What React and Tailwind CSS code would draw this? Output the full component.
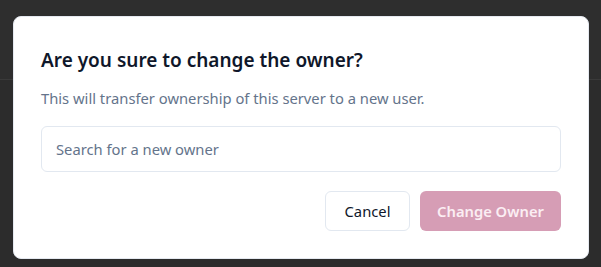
export default function App() {
    return (
        <div className="relative h-[267px] w-[601px] overflow-hidden bg-[#2c2c2c] font-['Noto_Sans',sans-serif]">
            {/* page behind the overlay */}
            <div className="h-[80px] border-b border-[#3a3a3a] bg-[#2e2e2e]" />

            <div className="absolute left-[13px] top-[16px] w-[576px] rounded-lg border border-[#e5e9f0] bg-white px-[27px] pb-[27px] pt-[29px]">
                <h2 className="text-[19px] font-semibold leading-7 text-[#0f172a]">
                    Are you sure to change the owner?
                </h2>

                <p className="mt-[14px] text-[14.75px] leading-5 text-[#64748b]">
                    This will transfer ownership of this server to a new user.
                </p>

                <input
                    type="text"
                    placeholder="Search for a new owner"
                    className="mt-[18px] h-[46px] w-full rounded-md border border-[#e2e8f0] px-[14px] text-[14.75px] text-[#0f172a] outline-none placeholder:text-[#64748b]"
                />

                <div className="mt-[19px] flex justify-end gap-[10px]">
                    <button
                        type="button"
                        className="h-10 w-[85px] rounded-md border border-[#e2e8f0] bg-white text-[14.75px] text-[#0f172a]"
                    >
                        Cancel
                    </button>

                    <button
                        type="button"
                        className="h-10 w-[141px] rounded-md bg-[#d69db5] text-[14.75px] font-semibold text-[#fbeef3]"
                    >
                        Change Owner
                    </button>
                </div>
            </div>
        </div>
    );
}
